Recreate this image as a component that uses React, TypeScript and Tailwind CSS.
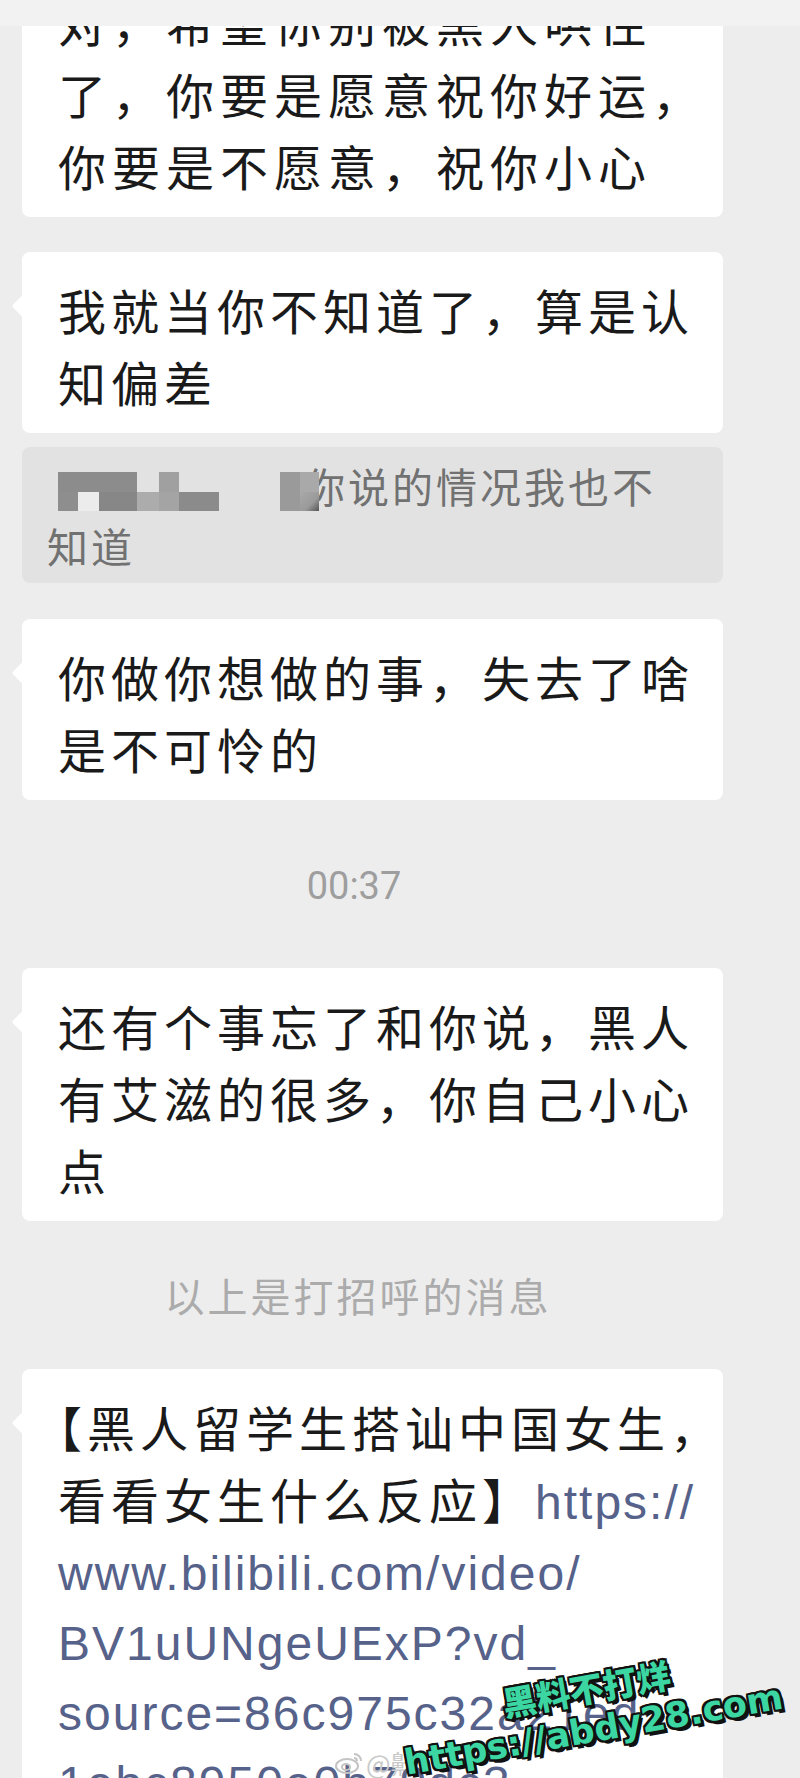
import React from 'react';

const cjk = "font-['Noto_Sans_CJK_SC',sans-serif]";
const line = 'whitespace-nowrap text-[48px] leading-[72px] tracking-[5px] text-[#1a1a1a]';
const wideLine = 'whitespace-nowrap text-[48px] leading-[72px] tracking-[6px] text-[#1a1a1a]';
const link = "font-['Liberation_Sans',Arial,sans-serif] tracking-[2px] text-[#56628a]";
const linkLine = "whitespace-nowrap text-[48px] leading-[70px] font-['Liberation_Sans',Arial,sans-serif] tracking-[2px] text-[#56628a]";

const Bubble = ({ children, tail = true, className = '' }: { children: React.ReactNode; tail?: boolean; className?: string }) => (
  <div className={`relative w-[701px] rounded-[8px] bg-white pl-[36px] pr-[10px] pt-[21px] pb-[16px] ${className}`}>
    {tail && <span className="absolute left-[-7px] top-[46px] h-[16px] w-[16px] rotate-45 rounded-[2px] bg-white" />}
    {children}
  </div>
);

// pixelated name in the quoted message
const Mosaic = () => (
  <svg width="161" height="39" viewBox="0 0 161 39" className="absolute left-[11px] top-[17px]">
    <rect x="0" y="0" width="79" height="20" fill="#8c8c8c" />
    <rect x="101" y="0" width="20" height="20" fill="#a0a0a0" />
    <rect x="0" y="20" width="20" height="19" fill="#8e8e8e" />
    <rect x="20" y="20" width="21" height="19" fill="#ececec" />
    <rect x="41" y="20" width="38" height="19" fill="#878787" />
    <rect x="79" y="20" width="22" height="19" fill="#acacac" />
    <rect x="101" y="20" width="20" height="19" fill="#a4a4a4" />
    <rect x="121" y="20" width="40" height="19" fill="#8b8b8b" />
  </svg>
);

const Mosaic2 = () => (
  <svg width="39" height="39" viewBox="0 0 39 39" className="absolute left-[233px] top-[17px]">
    <defs>
      <linearGradient id="g" x1="0" y1="0" x2="1" y2="1">
        <stop offset="0" stopColor="#a9a9a9" />
        <stop offset="0.6" stopColor="#9a9a9a" />
        <stop offset="1" stopColor="#555" />
      </linearGradient>
    </defs>
    <rect x="0" y="0" width="20" height="39" fill="#9a9a9a" />
    <rect x="20" y="0" width="19" height="20" fill="#a9a9a9" />
    <rect x="20" y="20" width="19" height="19" fill="url(#g)" />
  </svg>
);

export default function App() {
  return (
    <div className={`relative h-[1778px] w-[800px] overflow-hidden bg-[#ededed] ${cjk}`}>
      <div className="relative z-10 h-[26px] bg-[#f2f2f2]" />

      <div className="flex flex-col pl-[22px]">
        <Bubble tail={false} className="-mt-[62px]">
          <div className={wideLine}>对，希望你别被黑人哄住</div>
          <div className={wideLine}>了，你要是愿意祝你好运，</div>
          <div className={wideLine}>你要是不愿意，祝你小心</div>
        </Bubble>

        <Bubble className="mt-[35px]">
          <div className={line}>我就当你不知道了，算是认</div>
          <div className={line}>知偏差</div>
        </Bubble>

        {/* quoted message */}
        <div className="mt-[14px] w-[701px] rounded-[8px] bg-[#e2e2e2] pl-[25px] py-[8px] text-[41px] leading-[60px] tracking-[3px] text-[#717171]">
          <div className="relative whitespace-nowrap pl-[257px]">
            你说的情况我也不
            <Mosaic />
            <Mosaic2 />
          </div>
          <div>知道</div>
        </div>

        <Bubble className="mt-[36px]">
          <div className={line}>你做你想做的事，失去了啥</div>
          <div className={line}>是不可怜的</div>
        </Bubble>

        <div className="mt-[68px] w-[664px] text-center font-['Roboto',sans-serif] text-[38px] leading-[36px] text-[#9e9e9e]">
          00:37
        </div>

        <Bubble className="mt-[64px]">
          <div className={line}>还有个事忘了和你说，黑人</div>
          <div className={line}>有艾滋的很多，你自己小心</div>
          <div className={line}>点</div>
        </Bubble>

        <div className="mt-[50px] w-[672px] text-center text-[40px] leading-[48px] tracking-[3px] text-[#ababab]">
          以上是打招呼的消息
        </div>

        <Bubble className="mt-[50px]">
          <div className={line}>
            <span className="[font-feature-settings:'halt']">【</span>黑人留学生搭讪中国女生，
          </div>
          <div className={line}>
            看看女生什么反应】<span className={link}>https://</span>
          </div>
          <div className={linkLine}>www.bilibili.com/video/</div>
          <div className={linkLine}>BV1uUNgeUExP?vd_</div>
          <div className={linkLine}>source=86c975c32a21ed</div>
          <div className={linkLine}>1ebc8950e0b79dc3</div>
        </Bubble>
      </div>

      {/* faint weibo mark */}
      <div className="absolute left-[334px] top-[1748px] flex items-center gap-[2px] text-[26px] leading-[30px] text-[#c9c9c9]">
        <svg width="30" height="24" viewBox="0 0 30 24" fill="none" stroke="#c4c4c4" strokeWidth="2">
          <ellipse cx="13" cy="15" rx="11" ry="7" />
          <ellipse cx="12" cy="16" rx="4" ry="3" />
          <path d="M20 3c4 0 7 3 7 7" />
          <path d="M20 7c2 0 3 1 3 3" />
        </svg>
        <span>@鼾</span>
      </div>

      {/* site watermark */}
      <div className="absolute left-[390px] top-[1668px] w-[400px] -rotate-[10deg] text-center font-black text-[#3cd6a3] [text-shadow:2px_2px_0_#111,-2px_-2px_0_#111,2px_-2px_0_#111,-2px_2px_0_#111,0_2px_0_#111,2px_0_0_#111,0_-2px_0_#111,-2px_0_0_#111,3px_4px_0_#111]">
        <div className="text-[34px] leading-[40px]">黑料不打烊</div>
        <div className="font-['DejaVu_Sans',sans-serif] text-[35px] leading-[44px]">https://abdy28.com</div>
      </div>
    </div>
  );
}
